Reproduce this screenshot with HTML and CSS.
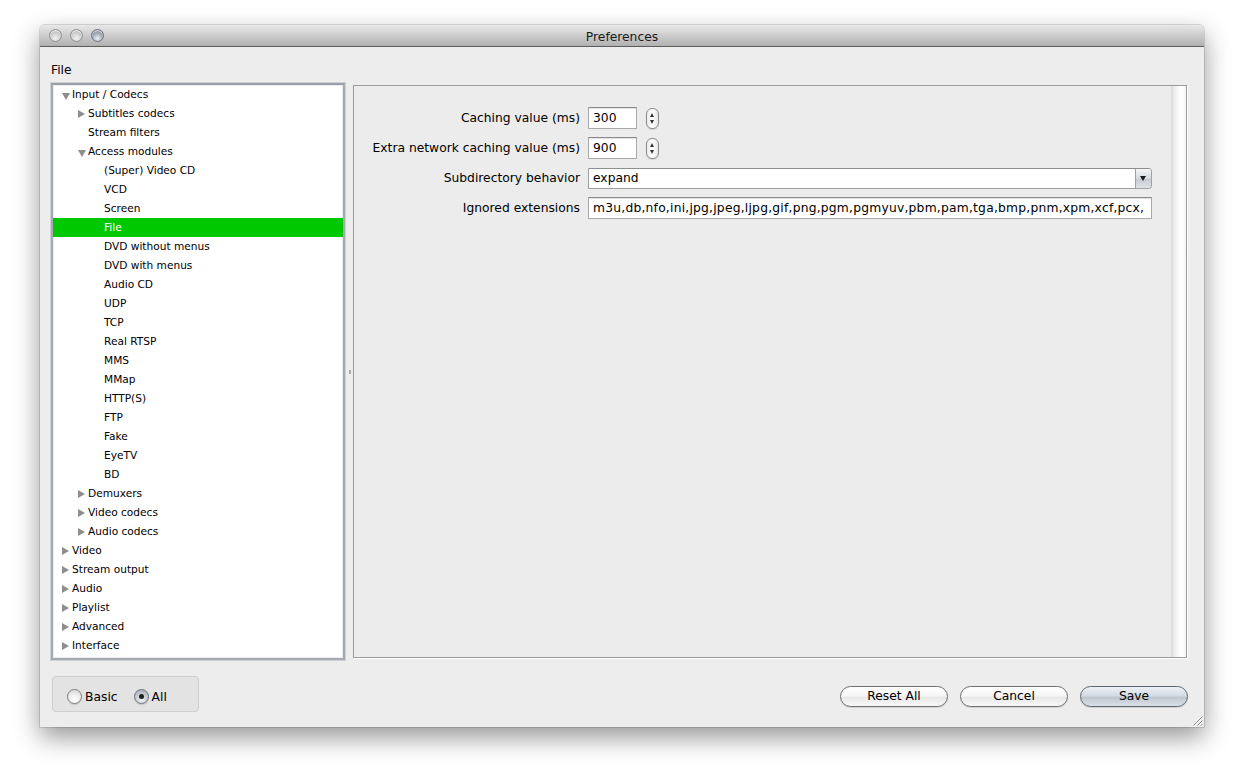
FILE: index.html
```html
<!DOCTYPE html>
<html>
<head>
<meta charset="utf-8">
<title>Preferences</title>
<link rel="stylesheet" href="styles.css">
</head>
<body>
<div class="window">
  <div class="titlebar">
    <div class="lights"><span class="light"></span><span class="light"></span><span class="light active"></span></div>
    <div class="title">Preferences</div>
  </div>
  <div class="content">
    <div class="section-label">File</div>
    <div class="main">
      <div class="tree">
        <div class="row l0"><span class="disc open"></span>Input / Codecs</div>
        <div class="row l1"><span class="disc closed"></span>Subtitles codecs</div>
        <div class="row l1"><span class="disc"></span>Stream filters</div>
        <div class="row l1"><span class="disc open"></span>Access modules</div>
        <div class="row l2"><span class="disc"></span>(Super) Video CD</div>
        <div class="row l2"><span class="disc"></span>VCD</div>
        <div class="row l2"><span class="disc"></span>Screen</div>
        <div class="row l2 selected"><span class="disc"></span>File</div>
        <div class="row l2"><span class="disc"></span>DVD without menus</div>
        <div class="row l2"><span class="disc"></span>DVD with menus</div>
        <div class="row l2"><span class="disc"></span>Audio CD</div>
        <div class="row l2"><span class="disc"></span>UDP</div>
        <div class="row l2"><span class="disc"></span>TCP</div>
        <div class="row l2"><span class="disc"></span>Real RTSP</div>
        <div class="row l2"><span class="disc"></span>MMS</div>
        <div class="row l2"><span class="disc"></span>MMap</div>
        <div class="row l2"><span class="disc"></span>HTTP(S)</div>
        <div class="row l2"><span class="disc"></span>FTP</div>
        <div class="row l2"><span class="disc"></span>Fake</div>
        <div class="row l2"><span class="disc"></span>EyeTV</div>
        <div class="row l2"><span class="disc"></span>BD</div>
        <div class="row l1"><span class="disc closed"></span>Demuxers</div>
        <div class="row l1"><span class="disc closed"></span>Video codecs</div>
        <div class="row l1"><span class="disc closed"></span>Audio codecs</div>
        <div class="row l0"><span class="disc closed"></span>Video</div>
        <div class="row l0"><span class="disc closed"></span>Stream output</div>
        <div class="row l0"><span class="disc closed"></span>Audio</div>
        <div class="row l0"><span class="disc closed"></span>Playlist</div>
        <div class="row l0"><span class="disc closed"></span>Advanced</div>
        <div class="row l0"><span class="disc closed"></span>Interface</div>
      </div>
      <div class="splitter"><span class="dimple"></span></div>
      <div class="panel">
        <div class="form">
          <div class="label">Caching value (ms)</div>
          <div class="field">
            <div class="textbox small">300</div>
            <div class="stepper"><span class="up"></span><span class="down"></span></div>
          </div>
          <div class="label">Extra network caching value (ms)</div>
          <div class="field">
            <div class="textbox small">900</div>
            <div class="stepper"><span class="up"></span><span class="down"></span></div>
          </div>
          <div class="label">Subdirectory behavior</div>
          <div class="field">
            <div class="select"><span class="select-value">expand</span><span class="select-btn"><span class="arrow"></span></span></div>
          </div>
          <div class="label">Ignored extensions</div>
          <div class="field">
            <div class="textbox wide">m3u,db,nfo,ini,jpg,jpeg,ljpg,gif,png,pgm,pgmyuv,pbm,pam,tga,bmp,pnm,xpm,xcf,pcx,</div>
          </div>
        </div>
        <div class="vscroll"></div>
      </div>
    </div>
    <div class="footer">
      <div class="radio-group">
        <label class="radio"><span class="radio-dot"></span>Basic</label>
        <label class="radio"><span class="radio-dot on"></span>All</label>
      </div>
      <div class="buttons">
        <div class="btn">Reset All</div>
        <div class="btn">Cancel</div>
        <div class="btn default">Save</div>
      </div>
    </div>
    <svg class="grip" width="11" height="11" viewBox="0 0 11 11">
      <path d="M10.5 1.5 L1.5 10.5 M10.5 5.5 L5.5 10.5 M10.5 9 L9 10.5" stroke="#8a8a8a" stroke-width="1"/>
      <path d="M10.5 2.5 L2.5 10.5 M10.5 6.5 L6.5 10.5" stroke="#ffffff" stroke-width="1"/>
    </svg>
  </div>
</div>
</body>
</html>
```

FILE: styles.css
```css
* { box-sizing: border-box; }
html, body { margin: 0; padding: 0; background: #ffffff; }
body {
  font-family: "DejaVu Sans", "Liberation Sans", sans-serif;
  color: #000;
  width: 1244px;
  height: 782px;
  overflow: hidden;
}
.window {
  position: relative;
  margin: 25px 0 0 40px;
  width: 1164px;
  height: 702px;
  background: #ededed;
  border-radius: 5px 5px 0 0;
  box-shadow: 0 10px 26px rgba(0,0,0,0.42), 0 0 0 1px rgba(0,0,0,0.12);
}
.titlebar {
  position: relative;
  height: 22px;
  border-radius: 5px 5px 0 0;
  background: linear-gradient(#e8e8e8, #cfcfcf 45%, #b0b0b0 100%);
  border-bottom: 1px solid #5c5c5c;
  display: flex;
  align-items: center;
  justify-content: center;
}
.lights {
  position: absolute;
  left: 9px;
  top: 4px;
  display: flex;
  gap: 8px;
}
.light {
  width: 13px;
  height: 13px;
  border-radius: 50%;
  border: 1px solid #8f8f8f;
  background: radial-gradient(circle at 50% 75%, #f2f2f2 0, #d6d6d6 40%, #b0b0b0 100%);
  box-shadow: inset 0 1px 1px rgba(255,255,255,0.8);
}
.light.active {
  border-color: #6b717b;
  background: radial-gradient(circle at 50% 78%, #eef2f6 0, #aab3bd 45%, #6e7783 100%);
}
.title {
  font-size: 12.3px;
  line-height: 16px;
  color: #1a1a1a;
  padding-top: 3px;
}
.content {
  padding: 0 16px 0 11px;
}
.section-label {
  height: 36px;
  padding-top: 15px;
  font-size: 12.3px;
  line-height: 16px;
}
.main {
  display: flex;
  align-items: flex-start;
  height: 577px;
}
.tree {
  width: 294px;
  height: 577px;
  background: #ffffff;
  border: 2px solid #a5a9b0;
  border-top-color: #9a9ea6;
  box-shadow: 0 0 0 1px #cdd0d5, inset 0 0 0 1px #e9ebee;
  overflow: hidden;
}
.row {
  height: 19px;
  line-height: 19px;
  font-size: 10.6px;
  white-space: nowrap;
  display: flex;
  align-items: center;
  color: #000;
}
.row.l0 { padding-left: 9px; }
.row.l1 { padding-left: 25px; }
.row.l2 { padding-left: 41px; }
.row.selected {
  background: #00c800;
  color: #ffffff;
}
.disc {
  width: 10px;
  height: 19px;
  flex: none;
  position: relative;
}
.disc.closed::before {
  content: "";
  position: absolute;
  left: 0;
  top: 6px;
  border-left: 7px solid #8e8e8e;
  border-top: 4px solid transparent;
  border-bottom: 4px solid transparent;
}
.disc.open::before {
  content: "";
  position: absolute;
  left: 0;
  top: 8px;
  border-top: 7px solid #8e8e8e;
  border-left: 4px solid transparent;
  border-right: 4px solid transparent;
}
.splitter {
  width: 8px;
  height: 577px;
  display: flex;
  align-items: center;
  justify-content: center;
}
.dimple {
  width: 2px;
  height: 4px;
  background: #a8a8a8;
  margin-left: 1px;
  margin-top: 1px;
}
.panel {
  margin-top: 2px;
  width: 834px;
  height: 573px;
  border: 1px solid #9b9b9b;
  box-shadow: 1px 1px 0 #ffffff;
  background: #ececec;
  display: flex;
}
.form {
  flex: 1;
  display: grid;
  grid-template-columns: 226px 564px;
  grid-auto-rows: 22px;
  column-gap: 8px;
  row-gap: 8px;
  align-content: start;
  padding-top: 21px;
}
.label {
  text-align: right;
  font-size: 12.3px;
  line-height: 22px;
  white-space: nowrap;
}
.field {
  display: flex;
  align-items: center;
  gap: 9px;
}
.textbox {
  height: 22px;
  background: #ffffff;
  border: 1px solid #a9a9a9;
  border-top-color: #8c8c8c;
  box-shadow: inset 0 1px 0 #e2e2e2;
  font-size: 12.3px;
  line-height: 20px;
  padding-left: 4px;
  white-space: nowrap;
  overflow: hidden;
}
.textbox.small { width: 49px; }
.textbox.wide { width: 564px; letter-spacing: 0.22px; }
.stepper {
  position: relative;
  width: 13px;
  height: 21px;
  border: 1px solid #8a8a8a;
  border-radius: 6px;
  background: linear-gradient(90deg, #ececec, #ffffff 50%, #e6e6e6);
  box-shadow: 0 1px 1px rgba(0,0,0,0.1);
}
.stepper .up, .stepper .down {
  position: absolute;
  left: 3px;
  width: 0;
  height: 0;
  border-left: 2.5px solid transparent;
  border-right: 2.5px solid transparent;
}
.stepper .up { top: 4px; border-bottom: 4px solid #333; }
.stepper .down { bottom: 4px; border-top: 4px solid #333; }
.select {
  width: 564px;
  height: 21px;
  display: flex;
  background: #ffffff;
  border: 1px solid #a0a0a0;
  border-top-color: #8e8e8e;
  border-radius: 0 4px 4px 0;
  overflow: hidden;
}
.select-value {
  flex: 1;
  font-size: 12.3px;
  line-height: 19px;
  padding-left: 4px;
}
.select-btn {
  width: 16px;
  position: relative;
  border-left: 1px solid #9aa0a8;
  background: linear-gradient(#f4f6f8, #d6dbe0 50%, #c3c9d0 51%, #dfe3e7);
}
.select-btn .arrow {
  position: absolute;
  left: 4px;
  top: 7px;
  border-top: 5px solid #1c1c1c;
  border-left: 3.5px solid transparent;
  border-right: 3.5px solid transparent;
}
.vscroll {
  width: 15px;
  height: 100%;
  background: linear-gradient(90deg, #d9d9d9 0, #ececec 20%, #fbfbfb 55%, #ffffff 75%, #f2f2f2 100%);
}
.footer {
  display: flex;
  justify-content: space-between;
  align-items: flex-start;
  height: 67px;
}
.radio-group {
  margin-top: 16px;
  margin-left: 1px;
  width: 147px;
  height: 36px;
  background: #e3e3e3;
  border: 1px solid #cfcfcf;
  border-radius: 4px;
  display: flex;
  align-items: center;
  padding-left: 14px;
  padding-top: 5px;
  gap: 16px;
}
.radio {
  display: flex;
  align-items: center;
  font-size: 12.3px;
  gap: 3px;
}
.radio-dot {
  width: 15px;
  height: 15px;
  border-radius: 50%;
  border: 1px solid #7f7f7f;
  background: radial-gradient(circle at 50% 80%, #ffffff 0, #f2f2f2 40%, #d4d4d4 100%);
  box-shadow: 0 1px 1px rgba(0,0,0,0.15);
  position: relative;
}
.radio-dot.on {
  background: radial-gradient(circle at 50% 80%, #eef1f4 0, #c3c9d0 55%, #9aa2ac 100%);
  border-color: #6f747b;
}
.radio-dot.on::after {
  content: "";
  position: absolute;
  left: 4px;
  top: 4px;
  width: 5px;
  height: 5px;
  border-radius: 50%;
  background: #1e1e1e;
}
.buttons {
  margin-top: 26px;
  display: flex;
  gap: 12px;
}
.btn {
  width: 108px;
  height: 21px;
  border: 1px solid #6f6f6f;
  border-radius: 11px;
  background: linear-gradient(#ffffff, #f6f6f6 45%, #e9e9e9 55%, #f7f7f7 100%);
  box-shadow: 0 1px 1px rgba(0,0,0,0.12);
  font-size: 12.3px;
  line-height: 19px;
  text-align: center;
}
.btn.default {
  border-color: #5d6670;
  background: linear-gradient(#eef1f5, #d4dbe2 45%, #bfc7d0 55%, #dae0e6 100%);
}
.grip {
  position: absolute;
  right: 1px;
  bottom: 1px;
}
```
